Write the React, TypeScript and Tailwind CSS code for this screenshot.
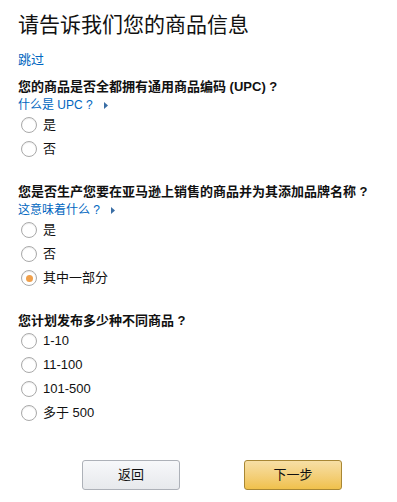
import React, { useState } from 'react';

const FONT = '"Liberation Sans", Arial, "Noto Sans CJK SC", sans-serif';

interface Question {
  id: string;
  title: string;
  link?: string;
  options: string[];
}

const questions: Question[] = [
  {
    id: 'upc',
    title: '您的商品是否全都拥有通用商品编码 (UPC) ?',
    link: '什么是 UPC ?',
    options: ['是', '否'],
  },
  {
    id: 'brand',
    title: '您是否生产您要在亚马逊上销售的商品并为其添加品牌名称 ?',
    link: '这意味着什么 ?',
    options: ['是', '否', '其中一部分'],
  },
  {
    id: 'count',
    title: '您计划发布多少种不同商品 ?',
    options: ['1-10', '11-100', '101-500', '多于 500'],
  },
];

function Radio({ checked }: { checked: boolean }) {
  return (
    <span className="flex h-4 w-4 shrink-0 items-center justify-center rounded-full border border-[#a9a9a9] bg-white shadow-[inset_0_1px_1px_rgba(0,0,0,0.08)]">
      {checked && <span className="h-[7px] w-[7px] rounded-full bg-[#f0a04b]" />}
    </span>
  );
}

export default function App() {
  const [answers, setAnswers] = useState<Record<string, string>>({ brand: '其中一部分' });

  return (
    <div className="min-h-[502px] w-[397px] bg-white pl-[18px] pt-[10px] text-[#111]" style={{ fontFamily: FONT }}>
      <h1 className="h-[30px] text-[21px] leading-[30px] font-normal">请告诉我们您的商品信息</h1>

      <a href="#" className="mt-[10px] block h-5 text-[13px] leading-5 text-[#0066c0]">跳过</a>

      {questions.map((q, i) => (
        <div key={q.id} className={i === 0 ? 'mt-[7px]' : 'mt-[21px]'}>
          <div className="h-5 text-[13px] leading-5 font-bold">{q.title}</div>
          {q.link && (
            <a href="#" className="flex h-4 items-center text-[12px] leading-4 text-[#0066c0]">
              {q.link}
              <svg className="ml-[11px]" width="4" height="7" viewBox="0 0 4 7">
                <polygon points="0,0 4,3.5 0,7" fill="#3a6ea5" />
              </svg>
            </a>
          )}
          <div className={q.link ? '' : '-mt-0.5'}>
            {q.options.map((opt) => (
              <label
                key={opt}
                className="ml-[3px] flex h-6 cursor-pointer items-center gap-[6px] text-[13px]"
                onClick={() => setAnswers({ ...answers, [q.id]: opt })}
              >
                <Radio checked={answers[q.id] === opt} />
                <span>{opt}</span>
              </label>
            ))}
          </div>
        </div>
      ))}

      <div className="mt-[35px] flex gap-[64px] pl-[64px]">
        <button className="h-[30px] w-[98px] rounded-[3px] border border-[#adb1b8] bg-gradient-to-b from-[#f7f8fa] to-[#e7e9ec] text-[13px] text-[#111]">
          返回
        </button>
        <button className="h-[30px] w-[98px] rounded-[3px] border border-[#a88734] bg-gradient-to-b from-[#f7dfa5] to-[#f0c14b] text-[13px] text-[#111]">
          下一步
        </button>
      </div>
    </div>
  );
}
